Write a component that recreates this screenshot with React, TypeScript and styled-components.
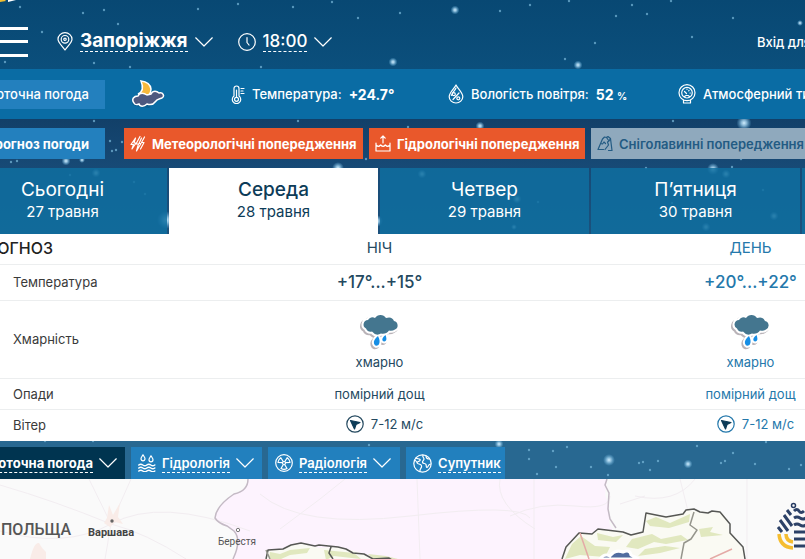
import React from "react";
import styled, { createGlobalStyle } from "styled-components";

const GlobalStyle = createGlobalStyle`
  *, *::before, *::after { box-sizing: border-box; }
  body { margin: 0; font-family: Inter, "Noto Sans", sans-serif; color: #fff; background: #fafafa; }
  button { font: inherit; color: inherit; border: 0; cursor: pointer; }
  a { color: inherit; text-decoration: none; }
`;

const Page = styled.main`
  position: relative;
  display: flex;
  flex-direction: column;
  min-height: 100vh;
  overflow: hidden;
  white-space: nowrap;
  background: linear-gradient(#084873 0, #0b4f7c 69px, #124069 120px, #174a76 168px, #286891 440px);
`;

const Stars = styled.svg`
  position: absolute;
  inset: 0;
  width: 100%;
  height: 100%;
  pointer-events: none;
`;

const TopBar = styled.header`
  position: relative;
  display: flex;
  align-items: center;
  height: 69px;
  padding: 14px 0 0;
  overflow: hidden;
`;

const MenuButton = styled.button`
  display: flex;
  flex-direction: column;
  justify-content: space-between;
  width: 28px;
  height: 30px;
  padding: 0;
  margin-right: 29px;
  background: none;
  span { height: 3px; background: #fff; }
`;

const Picker = styled.button<{ $bold?: boolean; $gap: number }>`
  display: flex;
  align-items: center;
  gap: 7px;
  padding: 0;
  margin-right: ${(p) => p.$gap}px;
  background: none;
  font-size: ${(p) => (p.$bold ? 19 : 17)}px;
  line-height: 20px;
  font-weight: ${(p) => (p.$bold ? 700 : 500)};
`;

const Dotted = styled.span`
  border-bottom: 1px dashed currentColor;
`;

const LoginLink = styled.a`
  flex: none;
  width: 48px;
  margin-left: auto;
  overflow: hidden;
  font-size: 13px;
  font-weight: 500;
`;

const CurrentBar = styled.section`
  position: relative;
  display: flex;
  align-items: center;
  height: 50px;
  overflow: hidden;
  background: #0a6ca4;
`;

const SideTitle = styled.h2<{ $height: number; $strong?: boolean }>`
  display: flex;
  flex: none;
  align-items: center;
  justify-content: flex-end;
  width: 145px;
  height: ${(p) => p.$height}px;
  margin: 0 0 0 -40px;
  padding-right: 16px;
  background: #2380be;
  font-size: 13px;
  font-weight: ${(p) => (p.$strong ? 700 : 500)};
`;

const NowIcon = styled.div`
  flex: none;
  width: 126px;
  padding-left: 26px;
  line-height: 0;
`;

const Metric = styled.div<{ $width: number }>`
  display: flex;
  flex: none;
  align-items: center;
  gap: 7px;
  width: ${(p) => p.$width}px;
  font-size: 13px;
  font-weight: 500;
  strong { font-size: 14px; font-weight: 700; }
  small { font-size: 10px; font-weight: 700; }
`;

const AlertBar = styled.section`
  position: relative;
  display: flex;
  align-items: center;
  gap: 5px;
  height: 49px;
  overflow: hidden;
`;

const AlertList = styled.div`
  display: flex;
  gap: 6px;
  margin-left: 14px;
`;

const AlertButton = styled.button<{ $width: number }>`
  display: flex;
  flex: none;
  align-items: center;
  gap: 6px;
  width: ${(p) => p.$width}px;
  height: 31px;
  padding: 0 6px;
  background: #e9582b;
  font-size: 13px;
  font-weight: 700;
  &:disabled { background: #8fa9bd; color: #235b83; font-weight: 600; cursor: default; }
`;

const DayTabs = styled.nav`
  position: relative;
  display: flex;
  gap: 2px;
  height: 66px;
  margin-left: -42px;
`;

const DayTab = styled.button<{ $active?: boolean }>`
  flex: 0 0 209px;
  padding: 0;
  background: ${(p) => (p.$active ? "#fff" : "rgba(15, 110, 160, 0.85)")};
  color: ${(p) => (p.$active ? "#0d3c58" : "#fff")};
  font-size: 19px;
  line-height: 22px;
  font-weight: ${(p) => (p.$active ? 500 : 400)};
  small { display: block; font-size: 15px; line-height: 22px; font-weight: 400; }
`;

const ForecastPanel = styled.section`
  position: relative;
  overflow: hidden;
  background: #fff;
`;

const ForecastTable = styled.table`
  width: 936px;
  table-layout: fixed;
  border-collapse: collapse;
  color: #24495f;
  font-size: 13px;
  line-height: 16px;
  th, td { padding: 0; text-align: center; font-weight: 400; }
  tr + tr > * , tbody tr > * { border-top: 1px solid #eceeef; }
  th:first-child { padding-left: 13px; text-align: left; color: #3a3a3a; }
  thead th { padding-bottom: 2px; font-size: 15px; }
  thead th:first-child { padding-left: 0; color: #222; font-size: 16px; font-weight: 500; }
  th:last-child, td:last-child { color: #2478ab; }
`;

const Row = styled.tr<{ $height: number }>`
  height: ${(p) => p.$height}px;
`;

const CutHeading = styled.span`
  display: flex;
  justify-content: flex-end;
  width: 53px;
`;

const Degrees = styled.span`
  font-size: 17px;
  font-weight: 500;
`;

const Cloudiness = styled.div`
  display: flex;
  flex-direction: column;
  align-items: center;
  gap: 4px;
  padding-top: 6px;
`;

const Wind = styled.span`
  display: inline-flex;
  align-items: center;
  gap: 7px;
  padding-left: 10px;
`;

const MapTabs = styled.nav`
  position: relative;
  display: flex;
  align-items: flex-end;
  gap: 6px;
  height: 38px;
`;

const MapTab = styled.button<{ $width: number; $active?: boolean; $cut?: boolean }>`
  display: flex;
  flex: none;
  align-items: center;
  justify-content: ${(p) => (p.$cut ? "flex-end" : "flex-start")};
  gap: 6px;
  width: ${(p) => p.$width}px;
  height: 32px;
  padding: 0 ${(p) => (p.$cut ? 8 : 7)}px;
  margin-left: ${(p) => (p.$cut ? -40 : 0)}px;
  background: ${(p) => (p.$active ? "#003450" : "#2280be")};
  font-size: 13px;
  line-height: 18px;
  font-weight: ${(p) => (p.$active ? 700 : 600)};
`;

const MapView = styled.section`
  position: relative;
  flex: 1;
  min-height: 80px;
  svg { display: block; width: 100%; height: 100%; min-height: 80px; }
`;

const Line = styled.svg`
  flex: none;
  fill: none;
  stroke: currentColor;
  stroke-width: 1.2;
  stroke-linecap: round;
  stroke-linejoin: round;
`;

const Chevron = () => (
  <Line width="18" height="10" viewBox="0 0 18 10"><path d="M.7 .8 9 9 17.3 .8" /></Line>
);

const PinIcon = () => (
  <Line width="16" height="19" viewBox="0 0 16 19">
    <path d="M8 18C5 13.500 1 10.500 1 7.200a7 6.500 0 0 1 14 0C15 10.500 11 13.500 8 18Z" />
    <circle cx="8" cy="7.300" r="3.800" /><circle cx="8" cy="7.300" r="1.200" />
  </Line>
);

const ClockIcon = () => (
  <Line width="18" height="18" viewBox="0 0 18 18"><circle cx="9" cy="9" r="8.300" /><path d="M9 4.500V9.500l2 2.500" /></Line>
);

const ThermometerIcon = () => (
  <Line width="14" height="19" viewBox="0 0 14 19">
    <path d="M3 11V3.500a2.500 2.500 0 0 1 5 0V11a4.200 4.200 0 1 1-5 0Z" />
    <circle cx="5.500" cy="14.300" r="2" /><path d="M5.500 5v7M10 3.500h3M10 6h2M10 8.500h3" />
  </Line>
);

const HumidityIcon = () => (
  <Line width="16" height="20" viewBox="0 0 16 20">
    <path d="M8 1C6 5 1.200 8.700 1.200 12.700a6.800 6.300 0 0 0 13.600 0C14.800 8.700 10 5 8 1Z" />
    <path d="M5 15.500 11 9M8 4c-1 2.500-4 4.500-4.600 7.500" /><circle cx="5.800" cy="10.200" r="1.500" /><circle cx="10.300" cy="14.300" r="1.500" />
  </Line>
);

const BarometerIcon = () => (
  <Line width="18" height="20" viewBox="0 0 18 20">
    <circle cx="9" cy="8.700" r="8" /><circle cx="9" cy="8.700" r="5.300" />
    <path d="m8.500 9.500-2-2M9 5v.3M12 9h.3M11 6.500l-.3.300M5.500 16v3h7v-3M6.500 12.500l1.500-1h2l1.500 1" />
  </Line>
);

const StormIcon = () => (
  <Line width="16" height="18" viewBox="0 0 16 18">
    <path d="M5.500 3 1 9.500h2.500L2 14l4-6H4ZM10 1.500 6 9h2.500L6.500 16 11 8.500H9L11.500 3M14.500 2 11.500 7.500H14L10.500 14" />
  </Line>
);

const FloodIcon = () => (
  <Line width="16" height="17" viewBox="0 0 16 17">
    <path d="M8 8V1M5.800 3.200 8 1l2.200 2.200M1 8v8h14V8M1 10c1.700 1.800 3 1.800 4.700 0 1.700 1.800 3 1.800 4.600 0C12 11.800 13.300 11.800 15 10" />
  </Line>
);

const AvalancheIcon = () => (
  <Line width="16" height="17" viewBox="0 0 16 17">
    <path d="M6.500 14.500H1L5.500 4l2-2 2 .5L11 1.500l2.500 2L15 15.500h-3.500M3.500 8.500l2 .5 1.500-2 1.500 1.500M9.500 2.500 12 6l-1.500 1 1 3L8 14.500M13.500 3.500 12 6" />
  </Line>
);

const HydroIcon = () => (
  <Line width="18" height="18" viewBox="0 0 18 18">
    <path d="M5 .8C4.300 2.300 3 3.200 3 4.800a2 2 0 0 0 4 0C7 3.200 5.700 2.300 5 .8ZM13 1.800c-.7 1.500-2 2.400-2 4a2 2 0 0 0 4 0c0-1.600-1.300-2.500-2-4Z" />
    <path strokeWidth="1.500" d="M.8 11q2-1.500 4 0t4 0 4 0 4 0M.8 14q2-1.500 4 0t4 0 4 0 4 0M.8 17q2-1.500 4 0t4 0 4 0 4 0" />
  </Line>
);

const RadiationIcon = () => (
  <Line width="18" height="18" viewBox="0 0 18 18">
    <circle cx="9" cy="9" r="8.300" /><circle cx="9" cy="9" r="1.500" />
    <path d="M7.300 8.700 3 8.300A6.200 6.200 0 0 1 5.800 3.700L8.200 7.500M10.700 8.700 15 8.300a6.200 6.200 0 0 0-2.800-4.600L9.800 7.500M8.200 10.700 6 14.500a6.200 6.200 0 0 0 6 0L9.800 10.700" />
  </Line>
);

const GlobeIcon = () => (
  <Line width="19" height="19" viewBox="0 0 19 19">
    <circle cx="9.500" cy="9.500" r="8.700" />
    <path d="M3 4c1 1 3 .5 4 1.500S5.500 7.500 4.500 8 4 9.500 6 10s3 1.500 2.500 3-2 2-1.500 4.500M2.500 6.500l2 2.500M10 1.200C9 3 11 3.500 11 5s-2 2-1.500 3.500 3 .5 3.500 2 0 3 1 3 1-3 3.500-3.500M13 2c0 2 1 3 3.500 3" />
  </Line>
);

const MoonCloudIcon = () => (
  <svg width="34" height="30" viewBox="0 0 34 30">
    <path d="M2 26c-3-4 0-8 4-9 1-4 6-5 9-3l15 1-12 14-9-1Z" fill="#0b4f7c" opacity=".5" />
    <path d="M10 2q9 1 10 8 0 4-2 6l-11-1q7-3 3-13Z" fill="#f6b83c" stroke="#fff" strokeWidth="1.500" />
    <path d="M3 24c-3-4 0-7 4-7 2-4 6-3 9-1l4-1c2-4 6-3 8-1 4-1 6 3 3 5-3 1-5 1-7 4-2 3-5 3-8 2-3 3-7 3-8 0-3 1-4 1-5-1Z" fill="#4d587f" stroke="#fff" strokeWidth="1.500" />
  </svg>
);

const CLOUD = "M5 14.500a4.500 4.500 0 0 1 2-8.500 5 5 0 0 1 7-2q2-3 5.500-3t5.500 3q6-2 8 3a4.500 4.500 0 0 1 1 8.500q-3 2-6 1-3 4-8 3-5 3-9-2-4 1-6-3Z";
const DROPS = "M17 22q-5 4-4 7.500 1 3.500 4.500 1.500Q20 28 17 22Zm7.500-1q-4 3-3 5.500 1.500 2 3.500 0 1-1.500-.5-5.500Z";

const RainIcon = () => (
  <svg width="42" height="36" viewBox="-2 0 42 36">
    <g fill="#b9b3b8" stroke="#b9b3b8" strokeWidth="4" strokeLinejoin="round" transform="translate(-1.500 1.500)">
      <path d={CLOUD} /><path d={DROPS} />
    </g>
    <g fill="#fff" stroke="#fff" strokeWidth="4" strokeLinejoin="round"><path d={CLOUD} /><path d={DROPS} /></g>
    <path d={CLOUD} fill="#44768f" />
    <path d={DROPS} fill="#168ee5" />
  </svg>
);

const WindIcon = () => (
  <Line width="18" height="18" viewBox="0 0 18 18">
    <circle cx="9" cy="9" r="8.200" /><path d="M4.500 5.500 14 7.500 10 9.500l-1.500 4.500Z" fill="#0d3c58" stroke="#0d3c58" />
  </Line>
);

const brightStars: [number, number, number][] = [
  [455, 10, 3], [578, 65, 3], [393, 62, 3], [800, 23, 2], [66, 161, 3], [82, 160, 2], [480, 126, 3], [744, 123, 5],
  [338, 168, 4], [96, 173, 3], [422, 174, 3], [713, 169, 4], [726, 174, 3], [706, 227, 3], [774, 216, 3], [517, 199, 3],
  [377, 221, 4], [166, 220, 6], [609, 460, 4], [688, 464, 3], [499, 444, 3], [514, 227, 2],
];

const faintStars: [number, number][] = [
  [20, 7], [83, 13], [104, 10], [118, 24], [42, 32], [5, 62], [94, 63], [130, 67], [198, 9], [238, 4], [293, 7], [332, 2],
  [358, 18], [400, 13], [500, 11], [530, 5], [569, 1], [616, 16], [632, 5], [671, 1], [733, 18], [692, 37], [565, 59],
  [261, 67], [647, 14], [595, 43], [94, 121], [110, 141], [112, 151], [116, 150], [11, 162], [17, 161], [122, 142],
  [298, 121], [408, 127], [673, 121], [366, 159], [741, 159], [646, 168], [732, 167], [70, 175], [134, 182], [145, 194],
  [538, 202], [763, 190], [672, 203], [529, 450], [529, 459], [553, 451], [556, 467], [567, 447], [591, 467], [639, 463],
  [643, 462], [650, 470], [697, 446], [733, 453], [721, 463], [725, 461], [789, 469], [801, 465], [766, 442], [369, 445],
  [45, 441], [93, 441], [658, 461], [608, 475], [537, 474], [755, 464],
];

const StarField = () => (
  <Stars aria-hidden="true">
    <defs>
      <radialGradient id="glow">
        <stop offset="0" stopColor="#d3efff" /><stop offset=".35" stopColor="#a6d4ef" stopOpacity=".8" />
        <stop offset="1" stopColor="#69b4df" stopOpacity="0" />
      </radialGradient>
    </defs>
    <path d="M0 0h5l1 1-6 1Z" fill="#f2be2f" /><path d="M8 0h8l-8 2Z" fill="#fff" />
    {brightStars.map(([x, y, r]) => <circle key={`${x}-${y}`} cx={x} cy={y} r={r * 1.5} fill="url(#glow)" />)}
    {faintStars.map(([x, y]) => <circle key={`${x}-${y}`} cx={x} cy={y} r="1.200" fill="#7bb9da" opacity=".7" />)}
  </Stars>
);

const MapDrawing = () => (
  <svg viewBox="0 0 805 80" preserveAspectRatio="xMinYMin slice" role="img" aria-label="Мапа">
    <rect width="805" height="400" fill="#fafafa" />
    <path d="M248 0q0 12-14 15-18 12-19 24 3 5 12 8l7 5q8 9-1 28v320h400L614 52l-5-8v-18l-4-10 2-16Z" fill="#fdf3fe" />
    <g fill="none" stroke="#f2edf1">
      <path d="M0 6q55 16 111 39Q160 18 250 52M111 45Q65 70 0 52M111 45 89 0M111 45l20-45M111 45l-6 35M111 45q35 9 75 35M260 15q40 35 150 22t120 2M417 0l3 80M345 0l-25 20-40 30M500 0q-5 25 35 50M510 37q30-14 65-10t35-10M635 17q40 9 60-17M534 0v80M747 0v80M645 17l-25 8M680 0l10 40" />
    </g>
    <path d="M107 39l2-13 4 10 7-12-2 14 5 7-8-2-5 5-6-4ZM30 80q4-17 9-16 3 6 7 9v7Z" fill="#f9ece8" />
    <g fill="none" stroke="#c4bac5" strokeWidth="1.500">
      <path d="M248 0q0 12-14 15-18 12-19 24 3 5 12 8l7 5q8 9-1 28M607 0l-2 6 4 8-1 16 2 10 6 9" />
    </g>
    <path d="M265 80l2-9 15-1 8-4 14-1 15 4 20-1 16 4 20 7 25 1 5 4v80H265ZM562 80l4-12 13-14 13 1 6-5 25 3 8 3 12-3 3-19 20 4 17-3 3-4 24 2 9-2 9 10 1 12 15 18v72H562Z" fill="#fafaf3" />
    <g fill="#dce4b5" opacity=".85">
      <path d="m270 73 10 2 10-4 20-2-3 5-17 2-9 4h-12ZM324 71l30 3 7 6-27-3-8 4ZM368 75l18 2 12 3h-25ZM572 65l9-8 14 10 15 1-5 10-25-2-15 4ZM597 54l16 4 10-2-7 7-18-2ZM646 42l10-4 14 6 20-9-1 8-20 6-19-2ZM632 60l20-5 9 5 20-4 7 5-22 4-12-2-16 7-12-2ZM699 50l14-2-3 5 13 3-22 2ZM645 70l20-3 15 2-20 5-22 3Z" />
    </g>
    <g fill="none" stroke="#565754" strokeWidth="1.500" strokeLinejoin="round">
      <path d="M266 80l2-9 15-1 8-4 10-2 14 3 4-1 19 2 8 2 7 4 11 1 9 5 16-1 3 2M562 80l4-12 13-14 13 1 6-5 25 3 8 3 12-3 3-19 20 4 17-3 3-4 8-1 6 3 8 1 4-2 8 1 10 12v9l13 14 2 12M331 68l-2 6 4 6" />
      <path d="m694 33-4 13 7 5-6 9-7 4-3 16M266 71l4 9" stroke="#95958c" />
    </g>
    <path d="m580 54 9 26M732 70l-22 10" stroke="#e4aaa6" fill="none" strokeWidth="1.500" />
    <path d="M600 80q4-6 10-3 5-7 13-4 7-3 8 3l8 4Z" fill="#526da0" stroke="#fff" strokeWidth="3" />
    <circle cx="112" cy="42" r="1.700" fill="#666" />
    <circle cx="238" cy="51" r="1.700" fill="#fff" stroke="#777" />
    <g fontFamily="Roboto, sans-serif" fill="#555">
      <text x="1" y="56" fontSize="16" fontWeight="500">ПОЛЬЩА</text>
      <text x="88" y="57" fontSize="11" fontWeight="700" fill="#444">Варшава</text>
      <text x="218" y="66" fontSize="10">Берестя</text>
    </g>
    <circle cx="793.500" cy="26.500" r="2" fill="none" stroke="#263b62" strokeWidth="1.500" />
    <g fill="none" stroke="#2c4167" strokeWidth="3">
      <path d="m787 32 4 5M784 37l8 11M780 42l8 11M778 49l4 5M794 33q3-3 5 0t5 0M794 40q3-2 6 0t6 0M794 47q3-2 6 0t6 0M794 54h14M794 61h14M794 68h12" transform="translate(0 -1)" />
    </g>
    <g fill="none" stroke="#f5bd30" strokeWidth="3.500">
      <path d="M779 55q1 13 14 14M786 55q0 7 7 8" />
    </g>
  </svg>
);

const days = [
  { name: "Сьогодні", date: "27 травня" },
  { name: "Середа", date: "28 травня", active: true },
  { name: "Четвер", date: "29 травня" },
  { name: "П’ятниця", date: "30 травня" },
  { name: "Субота", date: "31 травня" },
];

export default function App() {
  return (
    <Page>
      <GlobalStyle />
      <StarField />
      <TopBar>
        <MenuButton aria-label="Меню"><span /><span /><span /></MenuButton>
        <Picker $bold $gap={25}><PinIcon /><Dotted>Запоріжжя</Dotted><Chevron /></Picker>
        <Picker $gap={20}><ClockIcon /><Dotted>18:00</Dotted><Chevron /></Picker>
        <LoginLink href="#login">Вхід для</LoginLink>
      </TopBar>

      <CurrentBar>
        <SideTitle $height={29}>Поточна погода</SideTitle>
        <NowIcon><MoonCloudIcon /></NowIcon>
        <Metric $width={217}><ThermometerIcon />Температура: <strong>+24.7°</strong></Metric>
        <Metric $width={230}><HumidityIcon />Вологість повітря: <span><strong>52</strong> <small>%</small></span></Metric>
        <Metric $width={220}><BarometerIcon />Атмосферний тиск:</Metric>
      </CurrentBar>

      <AlertBar>
        <SideTitle $height={31} $strong>Прогноз погоди</SideTitle>
        <AlertList>
          <AlertButton $width={239}><StormIcon />Метеорологічні попередження</AlertButton>
          <AlertButton $width={216}><FloodIcon />Гідрологічні попередження</AlertButton>
          <AlertButton $width={240} disabled><AvalancheIcon />Сніголавинні попередження</AlertButton>
        </AlertList>
      </AlertBar>

      <DayTabs aria-label="Дні">
        {days.map((d) => (
          <DayTab key={d.date} $active={d.active}>{d.name}<small>{d.date}</small></DayTab>
        ))}
      </DayTabs>

      <ForecastPanel>
        <ForecastTable>
          <colgroup><col width="194" /><col width="371" /><col width="371" /></colgroup>
          <thead>
            <Row $height={30}><th scope="col"><CutHeading>ПРОГНОЗ</CutHeading></th><th scope="col">НІЧ</th><th scope="col">ДЕНЬ</th></Row>
          </thead>
          <tbody>
            <Row $height={36}><th scope="row">Температура</th><td><Degrees>+17°...+15°</Degrees></td><td><Degrees>+20°...+22°</Degrees></td></Row>
            <Row $height={78}>
              <th scope="row">Хмарність</th>
              <td><Cloudiness><RainIcon />хмарно</Cloudiness></td>
              <td><Cloudiness><RainIcon />хмарно</Cloudiness></td>
            </Row>
            <Row $height={31}><th scope="row">Опади</th><td>помірний дощ</td><td>помірний дощ</td></Row>
            <Row $height={32}><th scope="row">Вітер</th><td><Wind><WindIcon />7-12 м/с</Wind></td><td><Wind><WindIcon />7-12 м/с</Wind></td></Row>
          </tbody>
        </ForecastTable>
      </ForecastPanel>

      <MapTabs aria-label="Шари мапи">
        <MapTab $width={165} $active $cut><Dotted>Поточна погода</Dotted><Chevron /></MapTab>
        <MapTab $width={131}><HydroIcon /><Dotted>Гідрологія</Dotted><Chevron /></MapTab>
        <MapTab $width={132}><RadiationIcon /><Dotted>Радіологія</Dotted><Chevron /></MapTab>
        <MapTab $width={99}><GlobeIcon /><Dotted>Супутник</Dotted></MapTab>
      </MapTabs>

      <MapView><MapDrawing /></MapView>
    </Page>
  );
}
